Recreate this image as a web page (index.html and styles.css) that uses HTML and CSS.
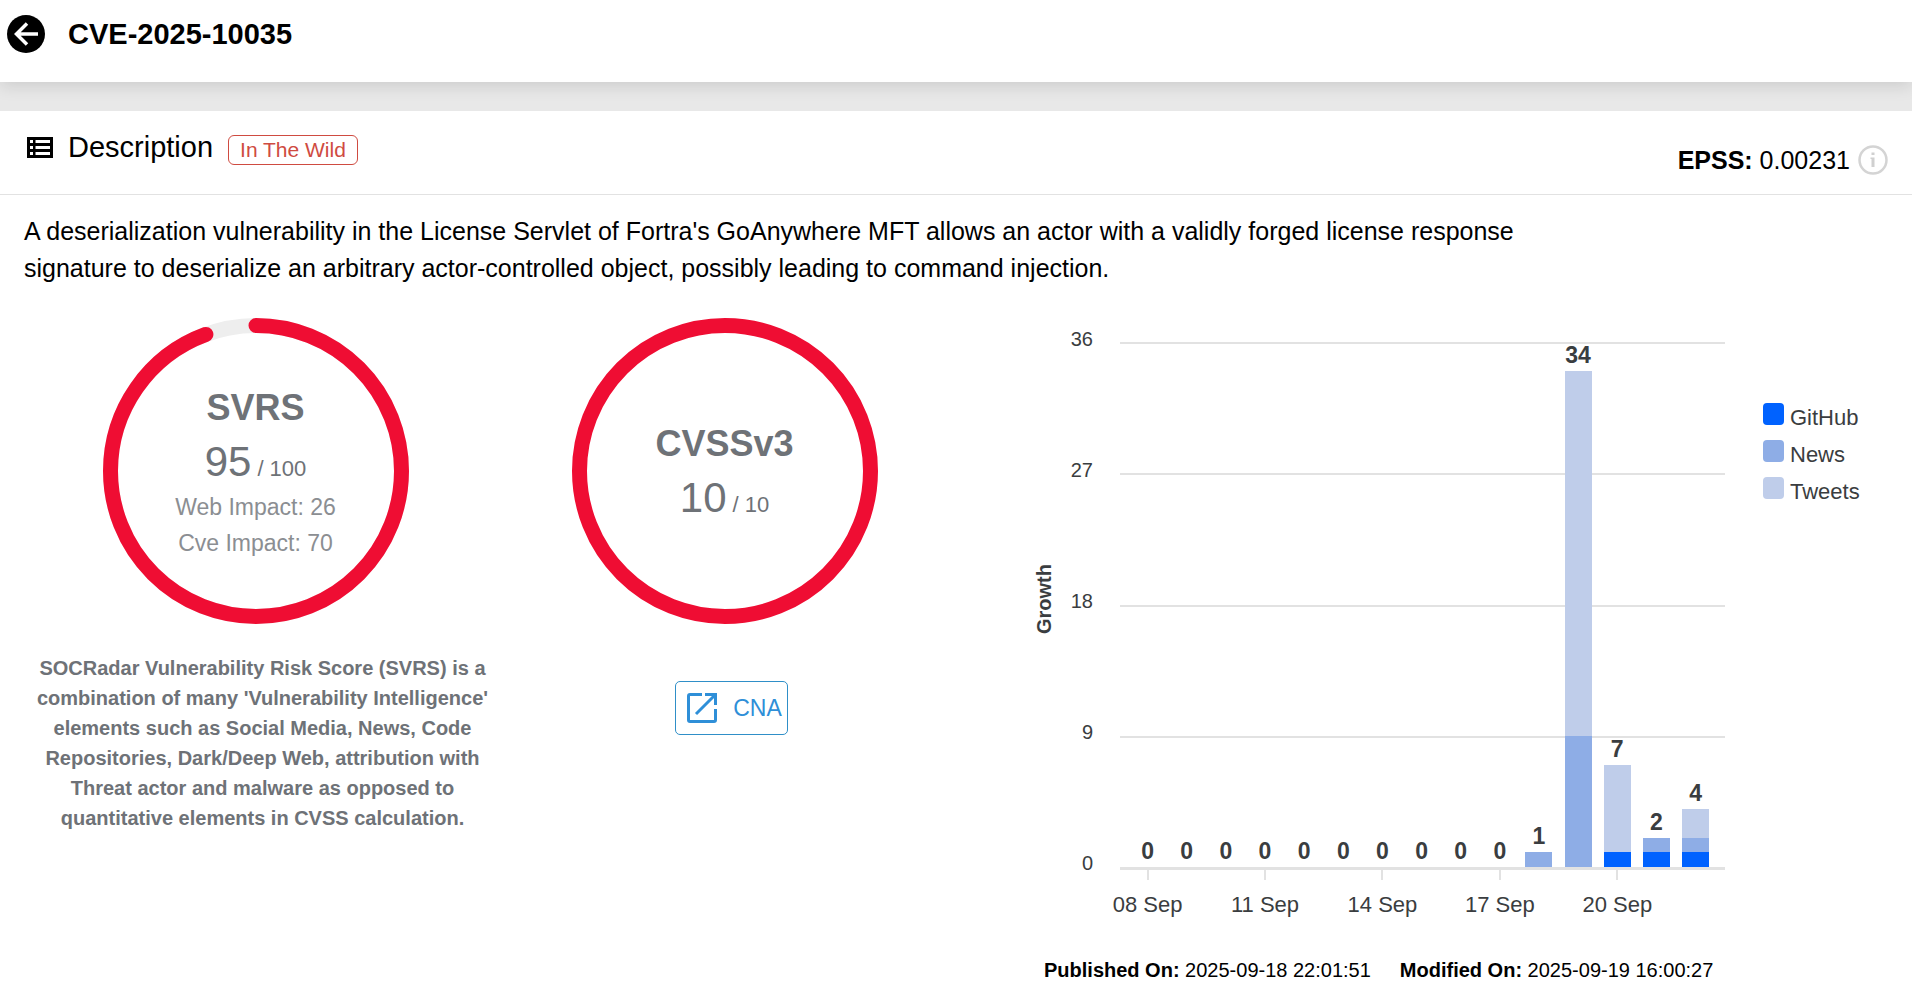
FILE: index.html
```html
<!DOCTYPE html>
<html lang="en">
  <head>
    <meta charset="UTF-8" />
    <meta name="viewport" content="width=device-width, initial-scale=1.0" />
    <title>CVE-2025-10035</title>
    <link rel="stylesheet" href="styles.css">
  </head>
  <body>
    <header class="page-header">
      <button class="back-btn" aria-label="Back">
        <svg width="38" height="38" viewBox="0 0 38 38">
          <circle cx="19" cy="19" r="19" fill="#000" />
          <path d="M31 19H10M20 8.500L9.500 19L20 29.500" fill="none" stroke="#fff" stroke-width="3.500" />
        </svg>
      </button>
      <h1>CVE-2025-10035</h1>
    </header>

    <main class="card">
      <div class="card-header">
        <div class="card-title">
          <svg class="list-icon" width="26" height="21" viewBox="0 0 26 21">
            <path fill="#000" fill-rule="evenodd" d="M0 0h26v21H0zM3 3v3h3V3zM8.500 3v3H23V3zM3 9v3h3V9zM8.500 9v3H23V9zM3 15v3h3v-3zM8.500 15v3H23v-3z" />
          </svg>
          <h2>Description</h2>
          <span class="badge">In The Wild</span>
        </div>
        <div class="epss">
          <span><b>EPSS:</b> 0.00231</span>
          <button class="info-btn" aria-label="About EPSS">
            <svg width="30" height="30" viewBox="0 0 30 30">
              <circle cx="15" cy="15" r="13.500" fill="none" stroke="#d4d4d4" stroke-width="2.500" />
              <path d="M13.500 7.500h3v2.500h-3zM12.500 12.500h4v9.500h-3v-8h-1z" fill="#d0d0d0" />
            </svg>
          </button>
        </div>
      </div>

      <p class="description">A deserialization vulnerability in the License Servlet of Fortra's GoAnywhere MFT allows an actor with a validly forged license response signature to deserialize an arbitrary actor-controlled object, possibly leading to command injection.</p>

      <div class="details">
        <section class="score">
          <div class="gauge">
            <svg viewBox="0 0 306 306">
              <circle class="track" cx="153" cy="153" r="145.500" />
              <circle class="ring" cx="153" cy="153" r="145.500" pathLength="100" stroke-dasharray="94.4 100" transform="rotate(-90 153 153)" />
            </svg>
            <div class="gauge-text">
              <h3>SVRS</h3>
              <p class="value">95 <small>/ 100</small></p>
              <p class="impact">Web Impact: 26</p>
              <p class="impact">Cve Impact: 70</p>
            </div>
          </div>
          <p class="score-note">SOCRadar Vulnerability Risk Score (SVRS) is a combination of many 'Vulnerability Intelligence' elements such as Social Media, News, Code Repositories, Dark/Deep Web, attribution with Threat actor and malware as opposed to quantitative elements in CVSS calculation.</p>
        </section>

        <section class="score">
          <div class="gauge">
            <svg viewBox="0 0 306 306">
              <circle class="ring" cx="153" cy="153" r="145.500" />
            </svg>
            <div class="gauge-text">
              <h3>CVSSv3</h3>
              <p class="value">10 <small>/ 10</small></p>
            </div>
          </div>
          <a class="cna-link" href="#">
            <svg width="30" height="30" viewBox="0 0 30 30" fill="none" stroke="#2f8fd8" stroke-width="3">
              <path d="M15 1.500H3Q1.500 1.500 1.500 3V27Q1.500 28.500 3 28.500H27Q28.500 28.500 28.500 27V16" />
              <path d="M18 1.500H28.500V12M28 2L9 21" />
            </svg>
            CNA
          </a>
        </section>

        <section class="growth">
          <div class="chart">
            <div class="y-title">Growth</div>
            <div class="y-axis">
              <span>36</span>
              <span>27</span>
              <span>18</span>
              <span>9</span>
              <span>0</span>
            </div>
            <div class="plot-area">
              <div class="plot">
                <div class="grid-lines"><i></i><i></i><i></i><i></i></div>
                <div class="bars">
                  <div class="bar"><b>0</b></div>
                  <div class="bar"><b>0</b></div>
                  <div class="bar"><b>0</b></div>
                  <div class="bar"><b>0</b></div>
                  <div class="bar"><b>0</b></div>
                  <div class="bar"><b>0</b></div>
                  <div class="bar"><b>0</b></div>
                  <div class="bar"><b>0</b></div>
                  <div class="bar"><b>0</b></div>
                  <div class="bar"><b>0</b></div>
                  <div class="bar">
                    <b>1</b>
                    <div class="news" style="height: 2.778%"></div>
                  </div>
                  <div class="bar">
                    <b>34</b>
                    <div class="tweets" style="height: 69.444%"></div>
                    <div class="news" style="height: 25%"></div>
                  </div>
                  <div class="bar">
                    <b>7</b>
                    <div class="tweets" style="height: 16.667%"></div>
                    <div class="github" style="height: 2.778%"></div>
                  </div>
                  <div class="bar">
                    <b>2</b>
                    <div class="news" style="height: 2.778%"></div>
                    <div class="github" style="height: 2.778%"></div>
                  </div>
                  <div class="bar">
                    <b>4</b>
                    <div class="tweets" style="height: 5.556%"></div>
                    <div class="news" style="height: 2.778%"></div>
                    <div class="github" style="height: 2.778%"></div>
                  </div>
                </div>
              </div>
              <div class="x-axis">
                <div class="tick"><span>08 Sep</span></div>
                <div></div>
                <div></div>
                <div class="tick"><span>11 Sep</span></div>
                <div></div>
                <div></div>
                <div class="tick"><span>14 Sep</span></div>
                <div></div>
                <div></div>
                <div class="tick"><span>17 Sep</span></div>
                <div></div>
                <div></div>
                <div class="tick"><span>20 Sep</span></div>
                <div></div>
                <div></div>
              </div>
            </div>
            <ul class="legend">
              <li><i class="github"></i>GitHub</li>
              <li><i class="news"></i>News</li>
              <li><i class="tweets"></i>Tweets</li>
            </ul>
          </div>
          <div class="dates">
            <span><b>Published On:</b> 2025-09-18 22:01:51</span>
            <span><b>Modified On:</b> 2025-09-19 16:00:27</span>
          </div>
        </section>
      </div>
    </main>
  </body>
</html>
```
FILE: styles.css
```css
* {
  margin: 0;
  padding: 0;
  box-sizing: border-box;
}

body {
  font-family: "Liberation Sans", Arial, sans-serif;
  background: #e8e8e8;
  color: #000;
}

button {
  border: none;
  background: none;
  cursor: pointer;
}

svg {
  display: block;
  flex-shrink: 0;
}

.page-header {
  display: flex;
  align-items: center;
  gap: 23px;
  padding: 14px 7px 28px;
  background: #fff;
  box-shadow: 0 4px 16px rgba(0, 0, 0, 0.12);
}

.page-header h1 {
  font-size: 29px;
  line-height: 40px;
}

.card {
  position: relative;
  margin-top: 29px;
  padding-bottom: 9px;
  background: #fff;
}

.card-header {
  display: flex;
  justify-content: space-between;
  min-height: 84px;
  padding: 17px 24px 18px 27px;
  border-bottom: 1px solid #e2e2e2;
}

.card-title {
  display: flex;
  align-items: center;
  align-self: flex-start;
}

.card-title h2 {
  margin: 0 15px;
  font-size: 29px;
  font-weight: normal;
  line-height: 38px;
}

.badge {
  margin-top: 6px;
  padding: 0 11px;
  border: 1px solid #cf4b41;
  border-radius: 6px;
  color: #cf4b41;
  font-size: 21px;
  line-height: 28px;
}

.epss {
  display: flex;
  align-items: center;
  align-self: flex-end;
  gap: 8px;
  font-size: 25px;
  line-height: 32px;
}

.description {
  max-width: 84%;
  padding: 18px 24px 0;
  font-size: 25px;
  line-height: 37px;
}

.details {
  display: grid;
  grid-template-columns: 469fr 469fr 922fr;
  padding: 31px 24px 0 28px;
}

.score {
  display: flex;
  flex-direction: column;
  align-items: center;
}

.gauge {
  display: grid;
  width: 306px;
  margin-right: 14px;
}

.gauge > * {
  grid-area: 1 / 1;
}

.gauge circle {
  fill: none;
  stroke-width: 15px;
}

.track {
  stroke: #eee;
}

.ring {
  stroke: #ef0d33;
  stroke-linecap: round;
}

.gauge-text {
  align-self: center;
  color: #6e7277;
  text-align: center;
}

.gauge-text h3 {
  font-size: 36px;
  line-height: 53px;
}

.value {
  display: flex;
  align-items: baseline;
  justify-content: center;
  gap: 6px;
  font-size: 42px;
  line-height: 55px;
}

.value small {
  font-size: 22px;
  line-height: 24px;
}

.impact {
  color: #8b8e92;
  font-size: 23px;
  line-height: 36px;
}

.score-note {
  max-width: 456px;
  margin-top: 29px;
  color: #6e7277;
  font-size: 20px;
  font-weight: bold;
  line-height: 30px;
  text-align: center;
}

.cna-link {
  display: flex;
  align-items: center;
  gap: 16px;
  margin-top: 57px;
  padding: 10px 5px 10px 11px;
  border: 1px solid #2f8fc8;
  border-radius: 5px;
  color: #2f8fd8;
  font-size: 23px;
  line-height: 32px;
  text-decoration: none;
}

.growth {
  padding: 24px 0 0 68px;
}

.chart {
  display: flex;
  color: #3a3d40;
}

.y-title {
  height: 525px;
  padding-top: 10px;
  font-size: 20px;
  font-weight: bold;
  line-height: 20px;
  text-align: center;
  writing-mode: vertical-rl;
  transform: rotate(180deg);
}

.y-axis {
  display: flex;
  flex-direction: column;
  justify-content: space-between;
  width: 39px;
  height: 544px;
  margin: -13px 27px 0 0;
  font-size: 20px;
  line-height: 20px;
  text-align: right;
}

.plot-area {
  flex: 1;
}

.plot {
  display: grid;
  grid-template-rows: 525px;
  border-bottom: 3px solid #e2e2e2;
}

.grid-lines,
.bars {
  grid-area: 1 / 1;
  display: flex;
}

.grid-lines {
  flex-direction: column;
}

.grid-lines i {
  flex: 1;
  border-top: 2px solid #e2e2e2;
}

.bars,
.x-axis {
  padding: 0 10px 0 8px;
}

.bar {
  flex: 1;
  display: flex;
  flex-direction: column;
  align-items: center;
  justify-content: flex-end;
}

.bar b {
  margin-bottom: 4px;
  font-size: 23px;
  line-height: 24px;
}

.bar div {
  flex-shrink: 0;
  width: 27px;
}

.github {
  background: #0062ff;
}

.news {
  background: #8eade6;
}

.tweets {
  background: #bfcdea;
}

.x-axis {
  display: flex;
  font-size: 22px;
  line-height: 26px;
}

.x-axis div {
  flex: 1;
  min-width: 0;
}

.x-axis .tick {
  display: flex;
  flex-direction: column;
  align-items: center;
  white-space: nowrap;
}

.tick::before {
  content: "";
  width: 2px;
  height: 10px;
  margin-bottom: 12px;
  background: #e2e2e2;
}

.legend {
  display: flex;
  flex-direction: column;
  gap: 7px;
  width: 125px;
  margin: 61px 0 0 38px;
  list-style: none;
  font-size: 22px;
  line-height: 30px;
}

.legend li {
  display: flex;
  gap: 6px;
}

.legend i {
  width: 21px;
  height: 22px;
  border-radius: 4px;
}

.dates {
  display: flex;
  gap: 29px;
  margin: 37px 0 0 10px;
  font-size: 20px;
  line-height: 30px;
}
```
